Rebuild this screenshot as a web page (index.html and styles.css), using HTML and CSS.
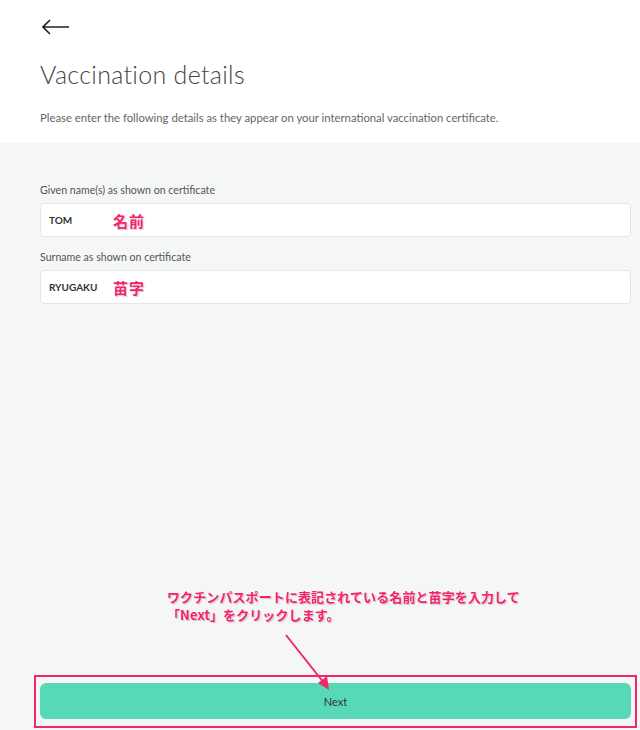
FILE: index.html
```html
<!DOCTYPE html>
<html lang="en">
<head>
    <meta charset="UTF-8">
    <meta name="viewport" content="width=device-width, initial-scale=1.0">
    <title>Vaccination details</title>
    <link rel="stylesheet" href="styles.css">
</head>
<body>

    <div class="page">
        <div class="header">
            <button class="back" aria-label="Back">
                <svg width="28" height="16" viewBox="0 0 28 16">
                    <path d="M27 8H1.5M8 1L1 8l7 7" fill="none" stroke="#222" stroke-width="1.6"/>
                </svg>
            </button>
            <h1 class="title">Vaccination details</h1>
            <p class="intro">Please enter the following details as they appear on your international vaccination certificate.</p>
        </div>

        <div class="content">
            <label class="field-label" for="given">Given name(s) as shown on certificate</label>
            <div class="field">
                <span class="field-value" id="given">TOM</span>
                <span class="note">名前</span>
            </div>

            <label class="field-label" for="surname">Surname as shown on certificate</label>
            <div class="field">
                <span class="field-value" id="surname">RYUGAKU</span>
                <span class="note">苗字</span>
            </div>

            <div class="spacer"></div>

            <p class="callout">ワクチンパスポートに表記されている名前と苗字を入力して<br>「Next」をクリックします。</p>

            <div class="highlight">
                <button class="next">Next</button>
            </div>
        </div>

        <svg class="pointer" width="640" height="730" viewBox="0 0 640 730">
            <line x1="286" y1="635" x2="324" y2="683" stroke="#f0286a" stroke-width="2"/>
            <path d="M329 690L318 683L327 676Z" fill="#f0286a"/>
        </svg>
    </div>

</body>
</html>
```

FILE: styles.css
```css
* {
    box-sizing: border-box;
}

body {
    margin: 0;
    font-family: Lato, "Noto Sans", sans-serif;
    color: #333;
    background: #f4f7f6;
}

.page {
    position: relative;
    display: flex;
    flex-direction: column;
    height: 730px;
    overflow: hidden;
}

.header {
    background: #fff;
    height: 143px;
    padding: 18px 40px 0 40px;
}

.back {
    display: block;
    padding: 0;
    margin: 0 0 0 2px;
    border: none;
    background: none;
    height: 20px;
}

.title {
    margin: 21px 0 0 0;
    font-size: 25px;
    font-weight: 300;
    color: #444;
    letter-spacing: 0.3px;
}

.intro {
    margin: 22px 0 0 0;
    font-size: 11.3px;
    color: #666;
}

.content {
    flex: 1;
    display: flex;
    flex-direction: column;
    padding: 41px 9px 0 40px;
}

.field-label {
    display: block;
    font-size: 10.6px;
    color: #555;
    margin-bottom: 7px;
}

.field {
    display: flex;
    align-items: center;
    height: 34px;
    background: #fff;
    border: 1px solid #e6e7e4;
    border-radius: 4px;
    padding: 0 8px;
    margin-bottom: 14px;
}

.field-value {
    font-size: 10px;
    font-weight: 700;
    color: #333;
    width: 64px;
}

.note {
    font-family: "Noto Sans CJK JP", sans-serif;
    font-size: 15px;
    font-weight: 700;
    color: #f5226a;
    letter-spacing: 1px;
    text-shadow: 0 0 2px #fff, 1px 1px 1px rgba(0, 0, 0, 0.25);
}

.spacer {
    flex: 1;
}

.callout {
    margin: 0 0 51px 127px;
    font-family: "Noto Sans CJK JP", sans-serif;
    font-size: 13px;
    font-weight: 700;
    line-height: 18px;
    letter-spacing: 0.1px;
    color: #f5226a;
    text-shadow: 0 0 2px #fff, 1px 1px 1px rgba(0, 0, 0, 0.25);
}

.highlight {
    margin: 0 -6px 2px -6px;
    border: 2px solid #f0286a;
    padding: 6px 4px 7px 4px;
}

.next {
    display: block;
    width: 100%;
    height: 36px;
    border: none;
    border-radius: 6px;
    background: #57d8b7;
    font-family: Lato, sans-serif;
    font-size: 11px;
    color: #333;
}

.pointer {
    position: absolute;
    left: 0;
    top: 0;
    pointer-events: none;
}
```
